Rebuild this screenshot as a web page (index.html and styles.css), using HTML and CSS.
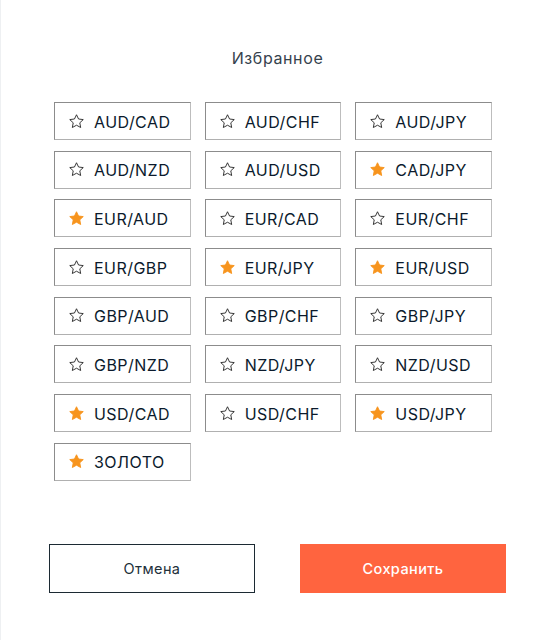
FILE: index.html
```html
<!DOCTYPE html>
<html lang="ru">
<head>
<meta charset="utf-8">
<title>Избранное</title>
<link rel="stylesheet" href="styles.css">
</head>
<body>
<svg width="0" height="0" class="defs">
  <defs>
    <path id="star" d="M8 0.8 L10.2 5.35 L15.2 5.95 L11.5 9.4 L12.45 14.4 L8 11.95 L3.55 14.4 L4.5 9.4 L0.8 5.95 L5.8 5.35 Z"/>
  </defs>
</svg>
<div class="dialog">
  <h1 class="title">Избранное</h1>
  <div class="grid">
    <div class="pair"><svg class="star" viewBox="0 0 16 16"><use href="#star"/></svg><span>AUD/CAD</span></div>
    <div class="pair"><svg class="star" viewBox="0 0 16 16"><use href="#star"/></svg><span>AUD/CHF</span></div>
    <div class="pair"><svg class="star" viewBox="0 0 16 16"><use href="#star"/></svg><span>AUD/JPY</span></div>
    <div class="pair"><svg class="star" viewBox="0 0 16 16"><use href="#star"/></svg><span>AUD/NZD</span></div>
    <div class="pair"><svg class="star" viewBox="0 0 16 16"><use href="#star"/></svg><span>AUD/USD</span></div>
    <div class="pair fav"><svg class="star" viewBox="0 0 16 16"><use href="#star"/></svg><span>CAD/JPY</span></div>
    <div class="pair fav"><svg class="star" viewBox="0 0 16 16"><use href="#star"/></svg><span>EUR/AUD</span></div>
    <div class="pair"><svg class="star" viewBox="0 0 16 16"><use href="#star"/></svg><span>EUR/CAD</span></div>
    <div class="pair"><svg class="star" viewBox="0 0 16 16"><use href="#star"/></svg><span>EUR/CHF</span></div>
    <div class="pair"><svg class="star" viewBox="0 0 16 16"><use href="#star"/></svg><span>EUR/GBP</span></div>
    <div class="pair fav"><svg class="star" viewBox="0 0 16 16"><use href="#star"/></svg><span>EUR/JPY</span></div>
    <div class="pair fav"><svg class="star" viewBox="0 0 16 16"><use href="#star"/></svg><span>EUR/USD</span></div>
    <div class="pair"><svg class="star" viewBox="0 0 16 16"><use href="#star"/></svg><span>GBP/AUD</span></div>
    <div class="pair"><svg class="star" viewBox="0 0 16 16"><use href="#star"/></svg><span>GBP/CHF</span></div>
    <div class="pair"><svg class="star" viewBox="0 0 16 16"><use href="#star"/></svg><span>GBP/JPY</span></div>
    <div class="pair"><svg class="star" viewBox="0 0 16 16"><use href="#star"/></svg><span>GBP/NZD</span></div>
    <div class="pair"><svg class="star" viewBox="0 0 16 16"><use href="#star"/></svg><span>NZD/JPY</span></div>
    <div class="pair"><svg class="star" viewBox="0 0 16 16"><use href="#star"/></svg><span>NZD/USD</span></div>
    <div class="pair fav"><svg class="star" viewBox="0 0 16 16"><use href="#star"/></svg><span>USD/CAD</span></div>
    <div class="pair"><svg class="star" viewBox="0 0 16 16"><use href="#star"/></svg><span>USD/CHF</span></div>
    <div class="pair fav"><svg class="star" viewBox="0 0 16 16"><use href="#star"/></svg><span>USD/JPY</span></div>
    <div class="pair fav"><svg class="star" viewBox="0 0 16 16"><use href="#star"/></svg><span>ЗОЛОТО</span></div>
  </div>
  <div class="actions">
    <button class="btn btn-cancel">Отмена</button>
    <button class="btn btn-save">Сохранить</button>
  </div>
</div>
</body>
</html>
```

FILE: styles.css
```css
html, body {
  margin: 0;
  padding: 0;
  background: #ffffff;
}
body {
  width: 554px;
  height: 640px;
  box-sizing: border-box;
  border-left: 1px solid #eef0f2;
  font-family: Inter, "Open Sans", sans-serif;
  color: #0d1b2a;
}
.defs {
  position: absolute;
  width: 0;
  height: 0;
}
.dialog {
  display: flex;
  flex-direction: column;
}
.title {
  margin: 47px 0 0;
  text-align: center;
  font-size: 16px;
  font-weight: 400;
  line-height: 22px;
  color: #35424d;
  letter-spacing: 0.6px;
}
.grid {
  margin: 33px 0 0 53px;
  width: 438px;
  display: grid;
  grid-template-columns: repeat(3, 1fr);
  column-gap: 14px;
  row-gap: 10.7px;
}
.pair {
  height: 38px;
  box-sizing: border-box;
  border: 1px solid #8c8c8c;
  border-right-color: #bdbdbd;
  border-bottom-color: #b0b0b0;
  display: flex;
  align-items: center;
  padding-left: 14px;
  gap: 10px;
  font-size: 16px;
  letter-spacing: 0.45px;
  color: #0b1a2c;
}
.pair span {
  line-height: 20px;
  padding-top: 1px;
}
.star {
  width: 15px;
  height: 15px;
  flex: none;
  fill: none;
  stroke: #222;
  stroke-width: 0.95;
  stroke-linejoin: round;
}
.fav .star {
  fill: #f7941d;
  stroke: #f7941d;
}
.actions {
  margin: 63px 48px 0;
  display: flex;
  justify-content: space-between;
}
.btn {
  width: 206px;
  height: 49px;
  box-sizing: border-box;
  font-family: Inter, "Open Sans", sans-serif;
  font-size: 14.5px;
  letter-spacing: 0.4px;
  cursor: pointer;
  padding: 0;
}
.btn-cancel {
  background: #ffffff;
  border: 1px solid #1c2a33;
  color: #22303a;
}
.btn-save {
  background: #ff643f;
  border: none;
  color: #ffffff;
  font-weight: 500;
}
```
